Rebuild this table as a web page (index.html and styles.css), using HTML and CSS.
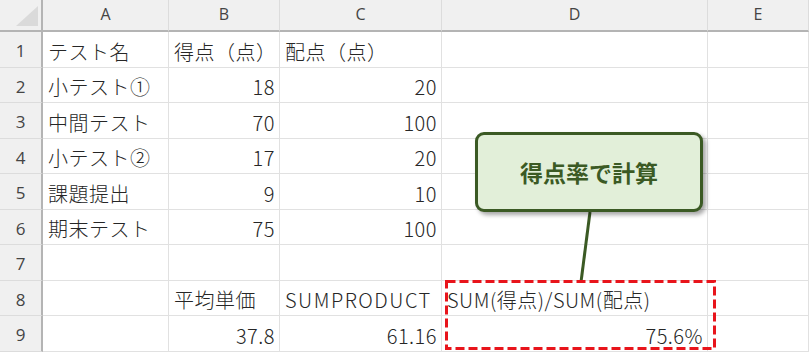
FILE: index.html
```html
<!DOCTYPE html>
<html lang="ja">
<head>
  <meta charset="UTF-8">
  <title>得点率</title>
  <link rel="stylesheet" href="styles.css">
</head>
<body>
  <div class="sheet">
    <div class="grid">
      <div class="corner"><span class="tri"></span></div>
      <div class="colhead">A</div>
      <div class="colhead">B</div>
      <div class="colhead">C</div>
      <div class="colhead">D</div>
      <div class="colhead">E</div>

      <div class="rowhead">1</div>
      <div class="cell">テスト名</div>
      <div class="cell">得点（点）</div>
      <div class="cell">配点（点）</div>
      <div class="cell"></div>
      <div class="cell"></div>

      <div class="rowhead">2</div>
      <div class="cell">小テスト①</div>
      <div class="cell num">18</div>
      <div class="cell num">20</div>
      <div class="cell"></div>
      <div class="cell"></div>

      <div class="rowhead">3</div>
      <div class="cell">中間テスト</div>
      <div class="cell num">70</div>
      <div class="cell num">100</div>
      <div class="cell"></div>
      <div class="cell"></div>

      <div class="rowhead">4</div>
      <div class="cell">小テスト②</div>
      <div class="cell num">17</div>
      <div class="cell num">20</div>
      <div class="cell"></div>
      <div class="cell"></div>

      <div class="rowhead">5</div>
      <div class="cell">課題提出</div>
      <div class="cell num">9</div>
      <div class="cell num">10</div>
      <div class="cell"></div>
      <div class="cell"></div>

      <div class="rowhead">6</div>
      <div class="cell">期末テスト</div>
      <div class="cell num">75</div>
      <div class="cell num">100</div>
      <div class="cell"></div>
      <div class="cell"></div>

      <div class="rowhead">7</div>
      <div class="cell"></div>
      <div class="cell"></div>
      <div class="cell"></div>
      <div class="cell"></div>
      <div class="cell"></div>

      <div class="rowhead">8</div>
      <div class="cell"></div>
      <div class="cell">平均単価</div>
      <div class="cell latin">SUMPRODUCT</div>
      <div class="cell">SUM(得点)/SUM(配点)</div>
      <div class="cell"></div>

      <div class="rowhead">9</div>
      <div class="cell"></div>
      <div class="cell num">37.8</div>
      <div class="cell num">61.16</div>
      <div class="cell num">75.6%</div>
      <div class="cell"></div>
    </div>

    <!-- callout leader line and dashed frame round D8:D9 -->
    <svg class="overlay" width="809" height="352">
      <line x1="590" y1="212" x2="581" y2="282" stroke="#3b5a24" stroke-width="3"/>
      <rect x="446.5" y="281.5" width="268" height="67" fill="none"
            stroke="#e8141b" stroke-width="3" stroke-dasharray="9 4"/>
    </svg>
    <div class="callout">得点率で計算</div>
  </div>
</body>
</html>
```

FILE: styles.css
```css
* {
  margin: 0;
  padding: 0;
  box-sizing: border-box;
}

body {
  background: #ffffff;
  font-family: "Noto Sans CJK JP", "Noto Sans", sans-serif;
  color: #262626;
  overflow: hidden;
}

.sheet {
  position: relative;
  width: 809px;
  height: 352px;
}

/* Spreadsheet grid */
.grid {
  display: grid;
  grid-template-columns: 43px 126px 111px 162px 266px 101px;
  grid-template-rows: 32px repeat(9, 35.5px);
}

.corner {
  position: relative;
  background: #f0f0f0;
  border-right: 2px solid #b4b4b4;
  border-bottom: 2px solid #b4b4b4;
}

.corner .tri {
  position: absolute;
  right: 3px;
  bottom: 4px;
  width: 0;
  height: 0;
  border-left: 22px solid transparent;
  border-bottom: 20px solid #dadada;
}

.colhead {
  display: flex;
  align-items: center;
  justify-content: center;
  background: #f0f0f0;
  border-right: 1px solid #dcdcdc;
  border-bottom: 2px solid #b4b4b4;
  font-family: "Open Sans", "Noto Sans", sans-serif;
  font-size: 16px;
  color: #444;
  padding-bottom: 2px;
}

.rowhead {
  display: flex;
  align-items: center;
  justify-content: center;
  background: #f0f0f0;
  border-right: 2px solid #b4b4b4;
  border-bottom: 1px solid #dcdcdc;
  font-family: "Open Sans", "Noto Sans", sans-serif;
  font-size: 17px;
  color: #444;
  padding-top: 3px;
}

.cell {
  display: flex;
  align-items: center;
  padding: 4px 5px 0 5px;
  border-right: 1px solid #e1e1e1;
  border-bottom: 1px solid #e1e1e1;
  font-size: 20px;
  font-weight: 300;
  letter-spacing: 0.5px;
  white-space: nowrap;
  overflow: hidden;
}

.cell.latin {
  letter-spacing: 1.5px;
}

.cell.num {
  justify-content: flex-end;
  padding-right: 4px;
}

/* Callout box */
.callout {
  position: absolute;
  left: 475px;
  top: 132px;
  width: 228px;
  height: 80px;
  display: flex;
  align-items: center;
  justify-content: center;
  background: #e2efd9;
  border: 3px solid #3b5a24;
  border-radius: 9px;
  box-shadow: 3px 3px 4px rgba(0, 0, 0, 0.35);
  color: #3b5a24;
  font-size: 23px;
  font-weight: bold;
}

.overlay {
  position: absolute;
  left: 0;
  top: 0;
}
```
